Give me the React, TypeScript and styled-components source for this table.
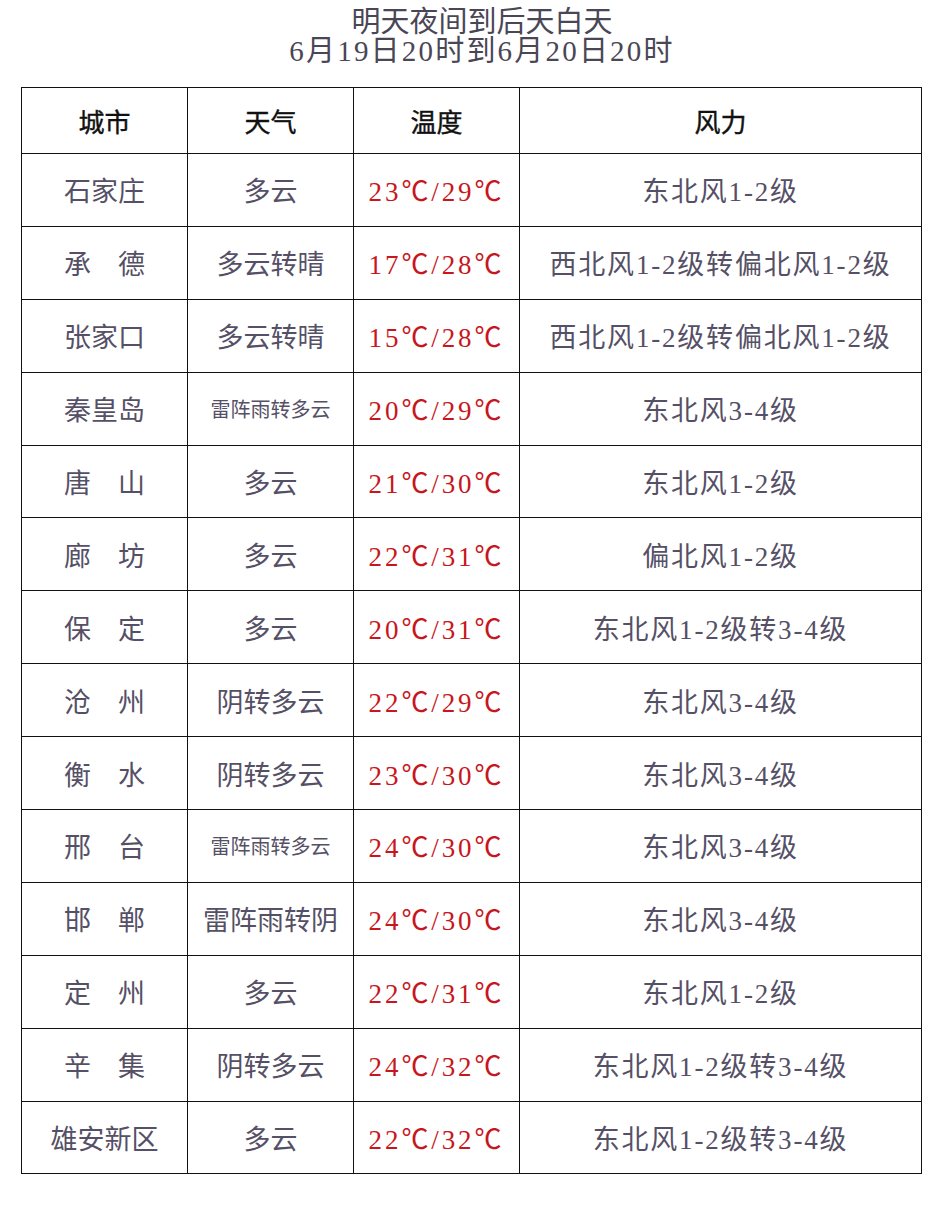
import React from "react";
import styled, { createGlobalStyle } from "styled-components";

const GlobalStyle = createGlobalStyle`
  html, body {
    margin: 0;
    padding: 0;
    background: #ffffff;
  }
  body {
    font-family: "Liberation Serif", "Noto Sans CJK SC", serif;
  }
`;

const Page = styled.div`
  width: 942px;
  min-height: 1218px;
  display: flex;
  flex-direction: column;
  align-items: center;
  padding-top: 8px;
  box-sizing: border-box;
`;

const Title = styled.div`
  text-align: center;
  color: #4a4656;
  font-size: 29px;
  line-height: 29px;
  margin: 0 0 21px 22px;
`;

const TitleLine = styled.div<{ $spaced?: boolean }>`
  letter-spacing: ${(p) => (p.$spaced ? "2.2px" : "0")};
`;

const Table = styled.table`
  width: 901px;
  margin-left: 1px;
  border-collapse: collapse;
  table-layout: fixed;
`;

const HeadCell = styled.th<{ $w?: number }>`
  width: ${(p) => (p.$w ? `${p.$w}px` : "auto")};
  height: 65px;
  border: 1.5px solid #111;
  font-weight: normal;
  color: #111;
  font-size: 26px;
  text-align: center;
  padding: 0;
  -webkit-text-stroke: 0.4px #111;
`;

const Cell = styled.td<{ $red?: boolean; $small?: boolean; $spaced?: boolean }>`
  height: 71.9px;
  border: 1.5px solid #111;
  text-align: center;
  padding: 0;
  color: ${(p) => (p.$red ? "#c8161d" : "#555066")};
  font-size: ${(p) => (p.$small ? "20px" : "27px")};
  letter-spacing: ${(p) => (p.$red ? "2.9px" : p.$spaced ? "1.8px" : "0")};
  white-space: nowrap;
`;

type Row = { city: string; weather: string; temp: string; wind: string };

const rows: Row[] = [
  { city: "石家庄", weather: "多云", temp: "23℃/29℃", wind: "东北风1-2级" },
  { city: "承　德", weather: "多云转晴", temp: "17℃/28℃", wind: "西北风1-2级转偏北风1-2级" },
  { city: "张家口", weather: "多云转晴", temp: "15℃/28℃", wind: "西北风1-2级转偏北风1-2级" },
  { city: "秦皇岛", weather: "雷阵雨转多云", temp: "20℃/29℃", wind: "东北风3-4级" },
  { city: "唐　山", weather: "多云", temp: "21℃/30℃", wind: "东北风1-2级" },
  { city: "廊　坊", weather: "多云", temp: "22℃/31℃", wind: "偏北风1-2级" },
  { city: "保　定", weather: "多云", temp: "20℃/31℃", wind: "东北风1-2级转3-4级" },
  { city: "沧　州", weather: "阴转多云", temp: "22℃/29℃", wind: "东北风3-4级" },
  { city: "衡　水", weather: "阴转多云", temp: "23℃/30℃", wind: "东北风3-4级" },
  { city: "邢　台", weather: "雷阵雨转多云", temp: "24℃/30℃", wind: "东北风3-4级" },
  { city: "邯　郸", weather: "雷阵雨转阴", temp: "24℃/30℃", wind: "东北风3-4级" },
  { city: "定　州", weather: "多云", temp: "22℃/31℃", wind: "东北风1-2级" },
  { city: "辛　集", weather: "阴转多云", temp: "24℃/32℃", wind: "东北风1-2级转3-4级" },
  { city: "雄安新区", weather: "多云", temp: "22℃/32℃", wind: "东北风1-2级转3-4级" },
];

export default function App() {
  return (
    <Page>
      <GlobalStyle />
      <Title>
        <TitleLine>明天夜间到后天白天</TitleLine>
        <TitleLine $spaced>6月19日20时到6月20日20时</TitleLine>
      </Title>
      <Table>
        <thead>
          <tr>
            <HeadCell $w={165}>城市</HeadCell>
            <HeadCell $w={165}>天气</HeadCell>
            <HeadCell $w={165}>温度</HeadCell>
            <HeadCell>风力</HeadCell>
          </tr>
        </thead>
        <tbody>
          {rows.map((r) => (
            <tr key={r.city}>
              <Cell>{r.city}</Cell>
              <Cell $small={r.weather.length > 5}>{r.weather}</Cell>
              <Cell $red>{r.temp}</Cell>
              <Cell $spaced>{r.wind}</Cell>
            </tr>
          ))}
        </tbody>
      </Table>
    </Page>
  );
}
